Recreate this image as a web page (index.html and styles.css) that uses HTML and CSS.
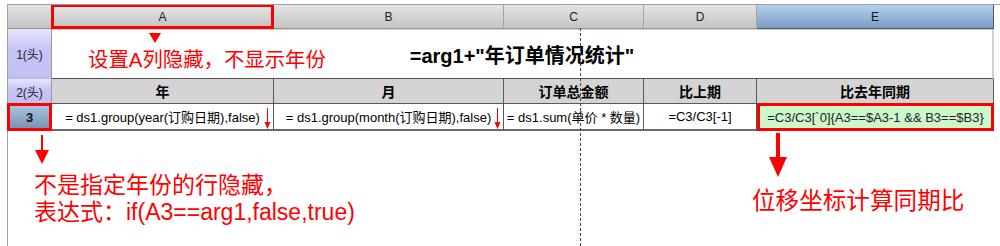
FILE: index.html
```html
<!DOCTYPE html>
<html lang="zh">
<head>
<meta charset="utf-8">
<title>同期比报表</title>
<link rel="stylesheet" href="styles.css">
</head>
<body>
<div class="page">
  <div class="sheet">
    <div class="corner"></div>
    <div class="colhead boxed">A</div>
    <div class="colhead">B</div>
    <div class="colhead">C</div>
    <div class="colhead">D</div>
    <div class="colhead active">E</div>

    <div class="rowhead">1(头)</div>
    <div class="title">
      <span class="title-text">=arg1+"年订单情况统计"</span>
      <svg class="tri" width="12" height="10" viewBox="0 0 12 10"><polygon points="0,0 12,0 6,10" fill="#ff0000"/></svg>
      <span class="note-a">设置A列隐藏，不显示年份</span>
    </div>

    <div class="rowhead">2(头)</div>
    <div class="hcell">年</div>
    <div class="hcell">月</div>
    <div class="hcell">订单总金额</div>
    <div class="hcell">比上期</div>
    <div class="hcell">比去年同期</div>

    <div class="rowhead current">3</div>
    <div class="cell">= ds1.group(year(订购日期),false)<svg class="mark" width="7" height="22" viewBox="0 0 7 22"><line x1="3.5" y1="0" x2="3.5" y2="16" stroke="#ff0000" stroke-width="1"/><polygon points="0.5,14 6.5,14 3.5,21" fill="#ff0000"/></svg></div>
    <div class="cell">= ds1.group(month(订购日期),false)<svg class="mark" width="7" height="22" viewBox="0 0 7 22"><line x1="3.5" y1="0" x2="3.5" y2="16" stroke="#ff0000" stroke-width="1"/><polygon points="0.5,14 6.5,14 3.5,21" fill="#ff0000"/></svg></div>
    <div class="cell">= ds1.sum(单价 * 数量)</div>
    <div class="cell">=C3/C3[-1]</div>
    <div class="cell green">=C3/C3[`0]{A3==$A3-1 &amp;&amp; B3==$B3}</div>
  </div>

  <div class="below">
    <div class="callout left">
      <svg class="arrow-l" width="14" height="30" viewBox="0 0 14 30"><rect x="6" y="0" width="2" height="16" fill="#ff0000"/><polygon points="0,15 14,15 7,29" fill="#ff0000"/></svg>
      <div class="note-b">不是指定年份的行隐藏，<br>表达式：if(A3==arg1,false,true)</div>
    </div>
    <div class="callout right">
      <svg class="arrow-r" width="20" height="46" viewBox="0 0 20 46"><rect x="8" y="0" width="4" height="26" fill="#ff0000"/><polygon points="1,24 19,24 10,44" fill="#ff0000"/></svg>
      <div class="note-c">位移坐标计算同期比</div>
    </div>
  </div>

  <div class="dash"></div>
</div>
</body>
</html>
```

FILE: styles.css
```css
* { box-sizing: border-box; }
html, body { margin: 0; padding: 0; background: #ffffff; }
body {
  font-family: "Liberation Sans", "Noto Sans CJK SC", sans-serif;
  color: #000;
  width: 1000px;
  height: 246px;
  overflow: hidden;
}
.page {
  position: relative;
  height: 246px;
  padding-top: 4px;
}
.page::before {
  content: "";
  display: block;
  position: absolute;
  left: 7px;
  right: 0;
  top: 4px;
  height: 1px;
  background: #98a0a8;
}
.sheet {
  margin-left: 7px;
  display: grid;
  grid-template-columns: 44px 222px 230px 140px 113px 237px;
  grid-template-rows: 25px 50px 25px 27px;
  border-left: 1px solid #a0a0a0;
}
.corner, .colhead {
  background: linear-gradient(#e4e4e4, #c4c4c4);
  border-top: 1px solid #98a0a8;
  border-right: 1px solid #a4a4a4;
  border-bottom: 1px solid #949494;
  font-size: 12px;
  color: #222;
  display: flex;
  align-items: center;
  justify-content: center;
}
.colhead.boxed {
  border: 3px solid #ff0000;
  margin-left: -1px;
}
.colhead.active {
  background: linear-gradient(#b4d0ec, #7c9cc4);
  border-right: 1px solid #4c5666;
  border-bottom: 1px solid #4c5666;
  border-top: 1px solid #6c7888;
  color: #111;
}
.rowhead {
  background: linear-gradient(#e6e6ff, #c4c4f6 45%, #c0c0f2);
  border-right: 1px solid #9a9a9a;
  border-bottom: 1px solid #b8b8d8;
  font-size: 12px;
  color: #222;
  display: flex;
  align-items: center;
  justify-content: center;
}
.rowhead.current {
  background: linear-gradient(#a8c4dc, #7894b4);
  border: 3px solid #ff0000;
  margin-left: -1px;
  margin-top: -1px;
  font-weight: bold;
  font-size: 13px;
  color: #111;
}
.title {
  grid-column: 2 / 7;
  position: relative;
  background: #fff;
  border-top: 1px solid #d0d0d0;
  border-right: 2px solid #d0d0d0;
  border-bottom: 1px solid #505050;
  display: flex;
  align-items: center;
  justify-content: center;
}
.title-text {
  font-size: 20px;
  font-weight: bold;
  color: #000;
}
.tri {
  position: absolute;
  left: 97px;
  top: 3px;
}
.note-a {
  position: absolute;
  left: 36px;
  top: 18px;
  font-size: 20.4px;
  line-height: 24px;
  color: #ff0000;
}
.hcell {
  background: #d4d4d4;
  border-right: 1px solid #5a5a5a;
  border-bottom: 1px solid #5a5a5a;
  font-size: 14px;
  font-weight: bold;
  display: flex;
  align-items: center;
  justify-content: center;
}
.cell {
  position: relative;
  background: #fff;
  border-right: 1px solid #5a5a5a;
  border-bottom: 2px solid #6a6a6a;
  font-size: 13px;
  white-space: nowrap;
  display: flex;
  align-items: center;
  justify-content: center;
}
.cell .mark {
  position: absolute;
  right: 2px;
  top: 4px;
}
.cell.green {
  background: #ccf8cc;
  border: 3px solid #ff0000;
  margin-top: -1px;
  color: #222;
}
.below {
  margin-left: 7px;
  height: 115px;
  border-left: 1px solid #a0a0a0;
  display: grid;
  grid-template-columns: 744px 1fr;
}
.callout {
  display: flex;
  flex-direction: column;
  align-items: flex-start;
  color: #ff0000;
}
.callout.left {
  padding-left: 27px;
  padding-top: 4px;
}
.note-b {
  margin-top: 7px;
  margin-left: -1px;
  font-size: 23px;
  line-height: 27px;
}
.callout.right {
  padding-top: 2px;
}
.arrow-r { margin-left: 16px; }
.note-c {
  margin-top: 9px;
  font-size: 23.6px;
  line-height: 27px;
}
.dash {
  position: absolute;
  left: 580px;
  top: 28px;
  bottom: 0;
  border-left: 1px dashed #444;
}
```
